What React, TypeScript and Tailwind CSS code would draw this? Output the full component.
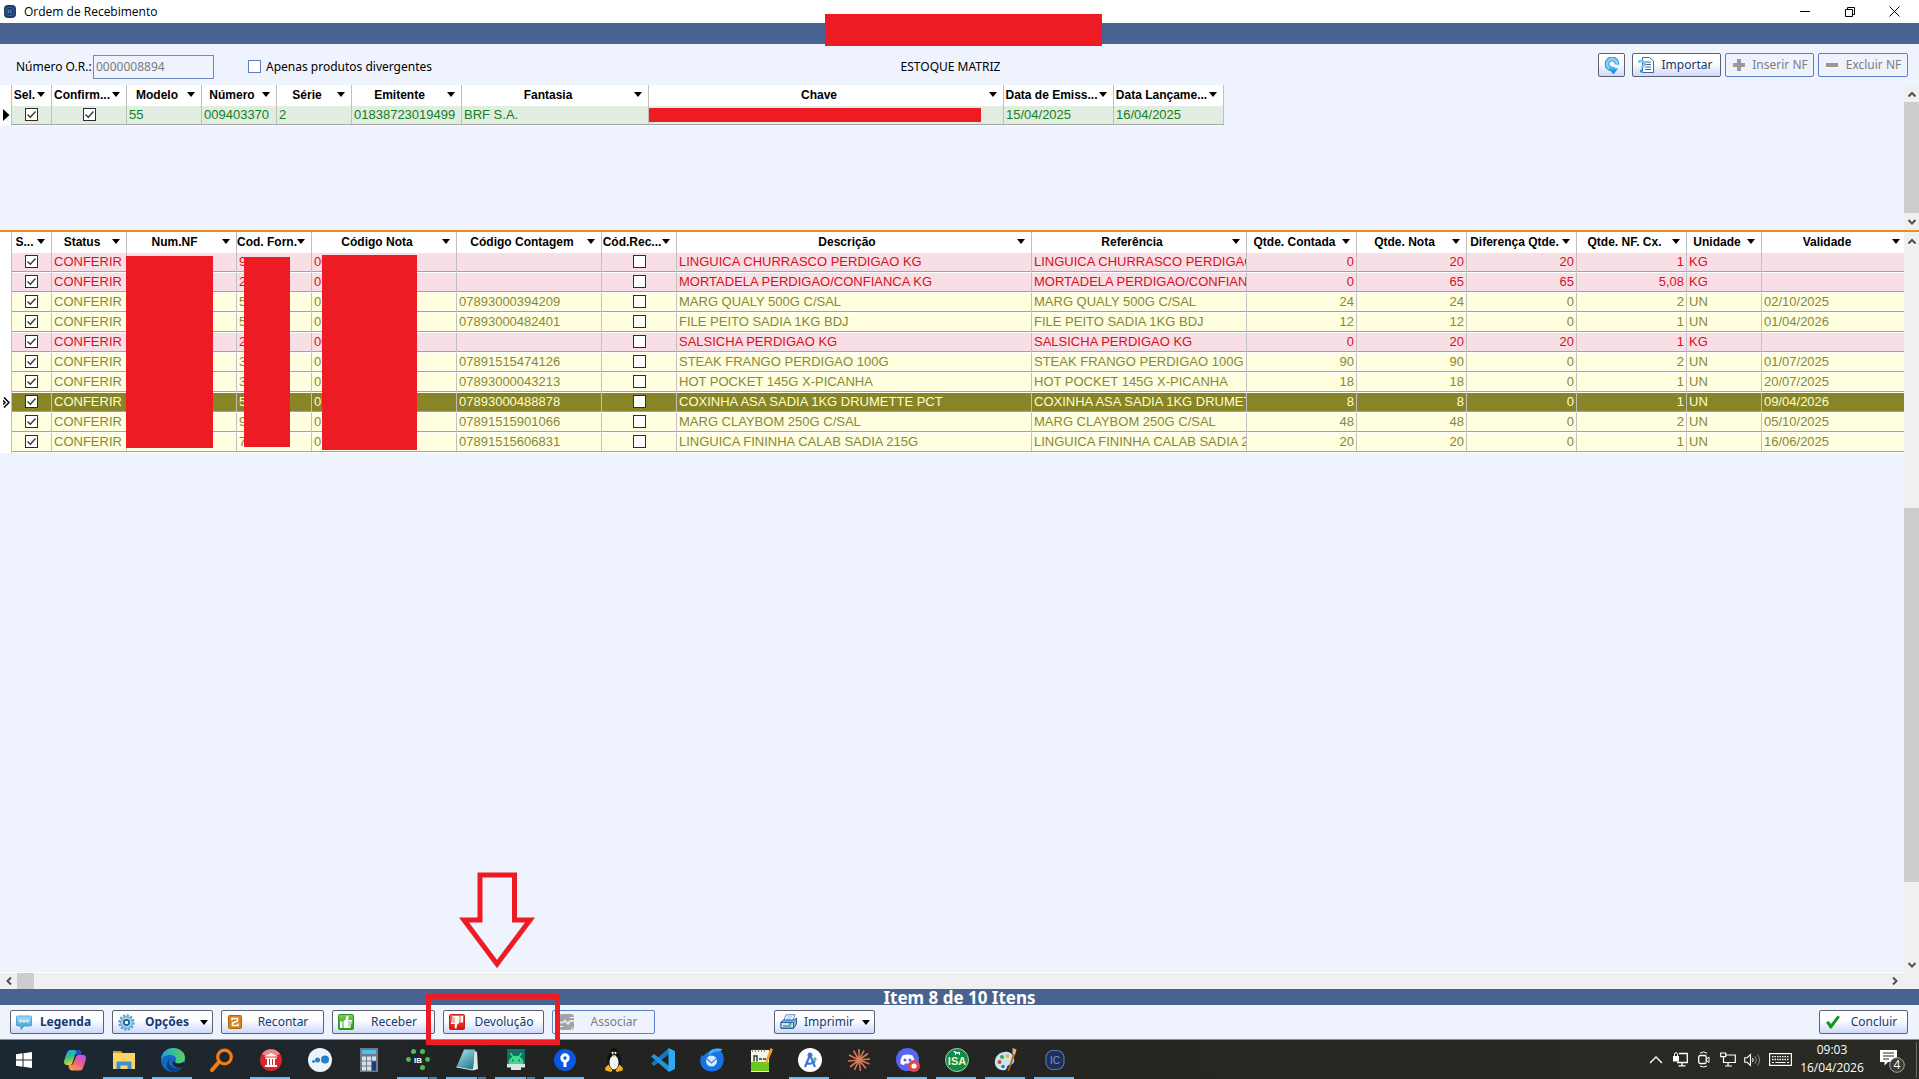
import React from "react";

const UI_FONT = "font-['Noto_Sans',sans-serif]";
const GRID_FONT = "font-['Liberation_Sans',Arial,sans-serif]";

type Align = "left" | "right" | "center";
type Column = { title: string; width: string; align?: Align };

const NOTE_COLUMNS: Column[] = [
  { title: "Sel.", width: "w-[40px]" },
  { title: "Confirm...", width: "w-[75px]" },
  { title: "Modelo", width: "w-[75px]" },
  { title: "Número", width: "w-[75px]" },
  { title: "Série", width: "w-[75px]" },
  { title: "Emitente", width: "w-[110px]" },
  { title: "Fantasia", width: "w-[187px]" },
  { title: "Chave", width: "w-[355px]" },
  { title: "Data de Emiss...", width: "w-[110px]" },
  { title: "Data Lançame...", width: "w-[110px]" },
];

const ITEM_COLUMNS: Column[] = [
  { title: "S...", width: "w-[40px]" },
  { title: "Status", width: "w-[75px]" },
  { title: "Num.NF", width: "w-[110px]" },
  { title: "Cod. Forn.", width: "w-[75px]" },
  { title: "Código Nota", width: "w-[145px]" },
  { title: "Código Contagem", width: "w-[145px]" },
  { title: "Cód.Rec...", width: "w-[75px]" },
  { title: "Descrição", width: "w-[355px]" },
  { title: "Referência", width: "w-[215px]" },
  { title: "Qtde. Contada", width: "w-[110px]" },
  { title: "Qtde. Nota", width: "w-[110px]" },
  { title: "Diferença Qtde.", width: "w-[110px]" },
  { title: "Qtde. NF. Cx.", width: "w-[110px]" },
  { title: "Unidade", width: "w-[75px]" },
  { title: "Validade", width: "" },
];

type Item = {
  forn: string;
  nota: string;
  contagem: string;
  desc: string;
  contada: string;
  qnota: string;
  dif: string;
  cx: string;
  un: string;
  validade: string;
};

const ITEMS: Item[] = [
  { forn: "9", nota: "00", contagem: "", desc: "LINGUICA CHURRASCO PERDIGAO KG", contada: "0", qnota: "20", dif: "20", cx: "1", un: "KG", validade: "" },
  { forn: "2", nota: "07", contagem: "", desc: "MORTADELA PERDIGAO/CONFIANCA KG", contada: "0", qnota: "65", dif: "65", cx: "5,08", un: "KG", validade: "" },
  { forn: "5", nota: "07", contagem: "07893000394209", desc: "MARG QUALY 500G C/SAL", contada: "24", qnota: "24", dif: "0", cx: "2", un: "UN", validade: "02/10/2025" },
  { forn: "5", nota: "07", contagem: "07893000482401", desc: "FILE PEITO SADIA 1KG BDJ", contada: "12", qnota: "12", dif: "0", cx: "1", un: "UN", validade: "01/04/2026" },
  { forn: "2", nota: "00", contagem: "", desc: "SALSICHA PERDIGAO KG", contada: "0", qnota: "20", dif: "20", cx: "1", un: "KG", validade: "" },
  { forn: "3", nota: "07", contagem: "07891515474126", desc: "STEAK FRANGO PERDIGAO 100G", contada: "90", qnota: "90", dif: "0", cx: "2", un: "UN", validade: "01/07/2025" },
  { forn: "3", nota: "07", contagem: "07893000043213", desc: "HOT POCKET 145G X-PICANHA", contada: "18", qnota: "18", dif: "0", cx: "1", un: "UN", validade: "20/07/2025" },
  { forn: "5", nota: "07", contagem: "07893000488878", desc: "COXINHA ASA SADIA 1KG DRUMETTE PCT", contada: "8", qnota: "8", dif: "0", cx: "1", un: "UN", validade: "09/04/2026" },
  { forn: "9", nota: "07", contagem: "07891515901066", desc: "MARG CLAYBOM 250G C/SAL", contada: "48", qnota: "48", dif: "0", cx: "2", un: "UN", validade: "05/10/2025" },
  { forn: "7", nota: "07", contagem: "07891515606831", desc: "LINGUICA FININHA CALAB SADIA 215G", contada: "20", qnota: "20", dif: "0", cx: "1", un: "UN", validade: "16/06/2025" },
];

const SELECTED = 7;

function Caret() {
  return (
    <svg width="8" height="5" viewBox="0 0 8 5" aria-hidden="true">
      <path d="M0 0h8L4 5z" fill="#000" />
    </svg>
  );
}

function Tick({ label, checked }: { label: string; checked?: boolean }) {
  return (
    <span className="grid size-[13px] place-items-center">
      <input
        type="checkbox"
        aria-label={label}
        defaultChecked={checked}
        className="peer col-start-1 row-start-1 size-[13px] appearance-none border border-[#2c2c2c] bg-white"
      />
      <svg viewBox="0 0 13 13" className="pointer-events-none col-start-1 row-start-1 hidden size-[13px] peer-checked:block" aria-hidden="true">
        <path d="M2.5 6.5l2.8 2.8L10.5 3.5" fill="none" stroke="#333" strokeWidth="1.3" />
      </svg>
    </span>
  );
}

function HeadRow({ columns }: { columns: Column[] }) {
  return (
    <thead>
      <tr className="h-[21px] bg-white">
        <th className="w-[12px] border-r border-[#c0c0c0] p-0" aria-label="Indicador" />
        {columns.map((c) => (
          <th key={c.title} className={`${c.width} border-r border-[#c0c0c0] p-0 text-xs leading-4 font-bold text-black`}>
            <div className="flex items-center overflow-hidden pr-1.5 pb-0.5">
              <span className="min-w-0 flex-1 text-center whitespace-nowrap">{c.title}</span>
              <button type="button" aria-label={`Filtrar ${c.title}`} className="flex h-4 w-2 shrink-0 items-center">
                <Caret />
              </button>
            </div>
          </th>
        ))}
      </tr>
    </thead>
  );
}

function Cell({ children, align = "left" }: { children?: React.ReactNode; align?: Align }) {
  const a = align === "right" ? "text-right" : align === "center" ? "text-center" : "text-left";
  return (
    <td className={`${a} overflow-hidden border-r border-b border-r-[#c0c0c0] border-b-white px-0.5 pt-0 pb-0.5 whitespace-nowrap shadow-[inset_0_-1px_0_#a3a3a3]`}>
      {children}
    </td>
  );
}

function TickCell({ label, checked }: { label: string; checked?: boolean }) {
  return (
    <Cell>
      <div className="flex justify-center">
        <Tick label={label} checked={checked} />
      </div>
    </Cell>
  );
}

function Redaction({ className }: { className: string }) {
  return <div aria-hidden="true" className={`absolute bg-[#ed1c24] ${className}`} />;
}

function Chevron({ dir }: { dir: "up" | "down" | "left" | "right" }) {
  const d = {
    up: "M1.5 7.5L5 4l3.5 3.5",
    down: "M1.5 3L5 6.5 8.5 3",
    left: "M7 1.5L3.5 5 7 8.5",
    right: "M3 1.5L6.5 5 3 8.5",
  }[dir];
  return (
    <svg width="10" height="10" viewBox="0 0 10 10" aria-hidden="true">
      <path d={d} fill="none" stroke="#505050" strokeWidth="2" />
    </svg>
  );
}

function VScroll({ children }: { children: React.ReactNode }) {
  return (
    <div className="flex w-[15px] shrink-0 flex-col bg-[#f0f0f0]">
      <button type="button" aria-label="Rolar para cima" className="grid h-[17px] place-items-center">
        <Chevron dir="up" />
      </button>
      <div className="flex flex-1 flex-col">{children}</div>
      <button type="button" aria-label="Rolar para baixo" className="grid h-[17px] place-items-center">
        <Chevron dir="down" />
      </button>
    </div>
  );
}

function ToolButton({
  icon,
  label,
  className,
  bold,
  disabled,
  caret,
}: {
  icon: React.ReactNode;
  label?: string;
  className: string;
  bold?: boolean;
  disabled?: boolean;
  caret?: boolean;
}) {
  const look = disabled
    ? "border-[#5b80cc] bg-[#eef3fe] text-[#7d7d7d]"
    : "border-[#5c6274] bg-linear-to-b from-white from-40% to-[#ced9fb] text-[#143a72]";
  return (
    <button
      type="button"
      disabled={disabled}
      aria-label={label ?? "Atualizar"}
      className={`${className} ${look} ${bold ? "font-bold" : ""} flex h-6 shrink-0 items-center rounded-xs border pr-1 pl-[5px] text-xs`}
    >
      <span className="grid size-4 shrink-0 place-items-center">{icon}</span>
      {label && <span className={`${caret || bold ? "" : "pl-1"} flex-1 text-center whitespace-nowrap`}>{label}</span>}
      {caret && <Caret />}
    </button>
  );
}

const RefreshIcon = () => (
  <svg width="16" height="18" viewBox="0 0 16 18">
    <path d="M13 7.500A5 5 0 1 0 8 12" fill="none" stroke="#2389cf" strokeWidth="4.600" />
    <path d="M13 7.500A5 5 0 1 0 8 12" fill="none" stroke="#86d3f7" strokeWidth="2.800" />
    <path d="M4.500 11.500h9.500L9.500 17.500z" fill="#2492dd" />
    <path d="M7.500 10h3.500v3H7.500z" fill="#4ab0ea" />
  </svg>
);

const ImportIcon = () => (
  <svg width="16" height="16" viewBox="0 0 16 16">
    <path d="M4.500.5h7l4 3.500v11.500h-11z" fill="#fff" stroke="#44679a" />
    <path d="M7 5h6M7 7.500h6M7 10h6M7 12.500h6" stroke="#44679a" />
    <path d="M0 5.500c2-2.500 6-2 6.500 1 .2 2-2.500 2-2.500 4.500" fill="none" stroke="#6fc8f5" strokeWidth="2.600" />
    <circle cx="3.500" cy="14" r="1.700" fill="#2a95dc" />
  </svg>
);

const PlusIcon = () => (
  <svg width="12" height="12" viewBox="0 0 12 12">
    <path d="M4 0h4v4h4v4H8v4H4V8H0V4h4z" fill="#9a9a9a" />
  </svg>
);

const MinusIcon = () => (
  <svg width="12" height="4" viewBox="0 0 12 4">
    <path d="M0 0h12v4H0z" fill="#9a9a9a" />
  </svg>
);

const LegendIcon = () => (
  <svg width="16" height="16" viewBox="0 0 16 16">
    <defs>
      <linearGradient id="lg" x2="0" y2="1">
        <stop stopColor="#a5dcf7" />
        <stop offset="1" stopColor="#2b95da" />
      </linearGradient>
    </defs>
    <path d="M1.500 2h13q1 0 1 1v8q0 1-1 1H8l-3 3.500V12H1.500q-1 0-1-1V3q0-1 1-1z" fill="url(#lg)" stroke="#3b97d0" strokeWidth=".8" />
    <g fill="none" stroke="#fff">
      <circle cx="4.500" cy="7" r="1.100" />
      <circle cx="8" cy="7" r="1.100" />
      <circle cx="11.500" cy="7" r="1.100" />
    </g>
  </svg>
);

const GearIcon = () => (
  <svg width="17" height="17" viewBox="0 0 17 17">
    <circle cx="8.500" cy="8.500" r="7.200" fill="none" stroke="#5b9fd2" strokeWidth="2" strokeDasharray="2.270 1.500" />
    <circle cx="8.500" cy="8.500" r="5.800" fill="#a8daf6" stroke="#4c94cc" />
    <circle cx="8.500" cy="8.500" r="2.600" fill="#fff" stroke="#1e5c96" strokeWidth="1.700" />
  </svg>
);

const RecountIcon = () => (
  <svg width="14" height="14" viewBox="0 0 14 14">
    <rect x=".5" y=".5" width="13" height="13" rx="1" fill="#d9801f" stroke="#b3620e" />
    <path d="M4 5.500V3.500h5.500V6L4.500 8v2.500H10v-2" fill="none" stroke="#fff" strokeWidth="1.600" />
  </svg>
);

const Thumb = ({ down }: { down?: boolean }) => (
  <svg width="16" height="16" viewBox="0 0 16 16">
    <defs>
      <linearGradient id={down ? "thd" : "thu"} x2="0" y2="1">
        <stop stopColor={down ? "#f26a5e" : "#7fce5c"} />
        <stop offset="1" stopColor={down ? "#d61208" : "#249a12"} />
      </linearGradient>
    </defs>
    <rect x=".5" y=".5" width="15" height="15" rx="1" fill={down ? "url(#thd)" : "url(#thu)"} stroke={down ? "#c4241a" : "#2f9420"} />
    <g transform={down ? "rotate(180 8 8)" : undefined}>
      <path d="M2 7.500h2.500V14H2z" fill="#fff" />
      <path d="M5.500 14V7.500L8 5l.5-3.500q2-.5 2 2L10 6h4v2h-.5v2H13v2h-.5v2z" fill="#fff" />
      <path d="M10 8h3.500M10 10h3M10 12h2.500" stroke={down ? "#e02418" : "#3fae2a"} strokeWidth=".700" />
    </g>
  </svg>
);

const AssociateIcon = () => (
  <svg width="15" height="16" viewBox="0 0 15 16">
    <rect width="15" height="16" rx="3" fill="#a3a3a3" />
    <path d="M0 8.500h4l2-2 3 3.500 2-3h4" fill="none" stroke="#eef3fe" strokeWidth="1.400" />
    <path d="M11 3.500h4M0 12.500h4M12 16l1.500-2.500" stroke="#eef3fe" fill="none" />
  </svg>
);

const PrinterIcon = () => (
  <svg width="17" height="16" viewBox="0 0 17 16">
    <path d="M6 .8h9L12.500 7H3.500z" fill="#fff" stroke="#5289c4" />
    <path d="M7 3h5M6 5h5" stroke="#8fb4dc" />
    <path d="M1 8l2.500-2H14l2.500-2v6l-3 4.500H1z" fill="#7db3e6" stroke="#2d629c" />
    <path d="M1 8.500h12.500V14H1z" fill="#cfe4f7" stroke="#2d629c" />
    <path d="M3 12h8" stroke="#2d629c" />
    <path d="M8.500 10h3" stroke="#3ba03b" strokeWidth="1.300" />
  </svg>
);

const CheckIcon = () => (
  <svg width="14" height="14" viewBox="0 0 14 14">
    <path d="M0 7.500L2.500 6l2.500 3L11.500.5 14 2 5.500 13.500H4z" fill="#0f9a17" />
  </svg>
);

/* ---- Taskbar icons ---- */

const Svg = ({ children }: { children: React.ReactNode }) => (
  <svg width="24" height="24" viewBox="0 0 24 24" aria-hidden="true">
    {children}
  </svg>
);

type App = { name: string; icon: React.ReactNode; open?: boolean; group?: boolean };

const APPS: App[] = [
  {
    name: "Copilot",
    icon: (
      <Svg>
        <defs>
          <linearGradient id="cp1" x1="0" x2=".3" y2="1">
            <stop stopColor="#1aa6f0" />
            <stop offset=".5" stopColor="#2fc08c" />
            <stop offset="1" stopColor="#e9d22a" />
          </linearGradient>
          <linearGradient id="cp2" x1="1" x2=".3" y2="1">
            <stop stopColor="#a45cf0" />
            <stop offset=".5" stopColor="#ee5a94" />
            <stop offset="1" stopColor="#f79a4c" />
          </linearGradient>
        </defs>
        <path d="M7 2h8q2.500 0 3.200 3H14q-1.500 0-2.200 2.500L9.500 15Q8.800 17 7 17H4Q.2 17 1.300 12L4 4.500Q5 2 7 2z" fill="url(#cp1)" />
        <path d="M12.500 2H15q2.500 0 3.200 3l.8 3h-5z" fill="#2449c4" />
        <path d="M17 22.500H9q-2.500 0-3.200-3l-.5-2.500H8q2 0 2.700-2.500L13 8.500Q13.700 7 15.500 7H20q3.800 0 2.700 5L20 20q-1 2.500-3 2.500z" fill="url(#cp2)" />
      </Svg>
    ),
  },
  {
    name: "Explorador de Arquivos",
    open: true,
    icon: (
      <Svg>
        <path d="M1 3h8l2 2.500H1z" fill="#d99a16" />
        <path d="M1 5h22v16H1z" fill="#fbd667" />
        <path d="M4.500 21v-7.500h15V21h-4v-3.500h-7V21z" fill="#3f8fd6" />
      </Svg>
    ),
  },
  {
    name: "Microsoft Edge",
    open: true,
    icon: (
      <Svg>
        <defs>
          <linearGradient id="ed" x2="1">
            <stop stopColor="#1d9be0" />
            <stop offset="1" stopColor="#5bd65a" />
          </linearGradient>
        </defs>
        <circle cx="12" cy="12" r="12" fill="#1169c4" />
        <path d="M0 11C1 4 6 0 12 0c7 0 12 4.500 12 9.500 0 4-3 6-6.500 6-3 0-4-1.200-3-2.500 2-3-1-6-5-6-4.500 0-8 2-9 4z" fill="url(#ed)" />
        <path d="M9 10c-3 5 1 11 8 10.500 2 0 4-.8 5-1.500-2 3.500-6 5-10 5C6 23 3 16 9 10z" fill="#0c3f8c" />
        <path d="M14.200 13.500c-1 2 3.500 3 7.800.5l2 1.500-1.500 3.500C19 21 11 19.500 11.500 13.500z" fill="#1f2428" />
      </Svg>
    ),
  },
  {
    name: "Pesquisar",
    icon: (
      <Svg>
        <circle cx="14.500" cy="9" r="6.800" fill="none" stroke="#f57c0e" strokeWidth="3.200" />
        <path d="M9 14l-7 8" stroke="#f57c0e" strokeWidth="4" strokeLinecap="round" />
      </Svg>
    ),
  },
  {
    name: "Banco",
    open: true,
    icon: (
      <Svg>
        <circle cx="12" cy="12" r="11" fill="#d8262b" />
        <path d="M3 6a11 11 0 0 1 18 0q-9 5-18 0z" fill="#f0898a" />
        <path d="M5 8.500L12 5l7 3.500zM6.500 9.500h11v1.500h-11zM8 11h2v6H8zM11 11h2v6h-2zM14 11h2v6h-2zM6 17h12v2H6z" fill="#fff" />
      </Svg>
    ),
  },
  {
    name: "Conector",
    icon: (
      <Svg>
        <circle cx="12" cy="12" r="12" fill="#e9f5fc" />
        <circle cx="17" cy="11.500" r="4" fill="#2a7fc4" />
        <circle cx="9.500" cy="12" r="2.500" fill="#2a7fc4" />
        <circle cx="5.500" cy="13.500" r="1.400" fill="#2a7fc4" />
      </Svg>
    ),
  },
  {
    name: "Calculadora",
    icon: (
      <Svg>
        <path d="M3 0h18v24H3z" fill="#6d7b88" />
        <path d="M5 2h14v4H5z" fill="#4cc3f0" />
        <path d="M5 8.500h4v4H5zM10 8.500h4v4h-4zM15 8.500h4v4h-4zM5 13.500h4v4H5zM10 13.500h4v4h-4zM5 18.500h4v4H5zM10 18.500h4v4h-4z" fill="#d9e2ea" />
        <path d="M15 13.500h4v9h-4z" fill="#143f78" />
      </Svg>
    ),
  },
  {
    name: "IB",
    open: true,
    group: true,
    icon: (
      <Svg>
        <g fill="#4bc04b">
          <circle cx="7.500" cy="3.500" r="2.500" />
          <circle cx="16.500" cy="3.500" r="2.500" />
          <circle cx="2.500" cy="11.500" r="2.400" />
          <circle cx="21.500" cy="11.500" r="2.400" />
          <circle cx="16.500" cy="19.500" r="2.500" />
        </g>
        <text x="12" y="14.500" textAnchor="middle" fontSize="8" fontWeight="700" fill="#fff" fontFamily="Liberation Sans">IB</text>
      </Svg>
    ),
  },
  {
    name: "Bloco de Notas",
    open: true,
    group: true,
    icon: (
      <Svg>
        <defs>
          <linearGradient id="nt" x2=".6" y2="1">
            <stop stopColor="#b5e8ee" />
            <stop offset="1" stopColor="#2b7f96" />
          </linearGradient>
        </defs>
        <path d="M19 2.500l3 1.500 1 17-5 1.500z" fill="#dfe6e8" />
        <path d="M9 1.500h11L17.500 22 1.500 19z" fill="url(#nt)" />
        <path d="M1.500 19L17.500 22l1-2" fill="none" stroke="#cfe0e4" />
      </Svg>
    ),
  },
  {
    name: "Android",
    open: true,
    group: true,
    icon: (
      <Svg>
        <path d="M3 1h18v17H3z" fill="#116f63" />
        <path d="M4.500 16c0-11 15-11 15 0z" fill="#3ddc84" />
        <path d="M6.500 5L9.500 9.500M17.500 5L14.500 9.500" stroke="#3ddc84" strokeWidth="1.500" />
        <circle cx="8.800" cy="12.500" r=".9" fill="#116f63" />
        <circle cx="15.200" cy="12.500" r=".9" fill="#116f63" />
        <path d="M3 16h18v3.500H3zM7 19.500h10V22H7z" fill="#dfe5e6" />
      </Svg>
    ),
  },
  {
    name: "Sourcetree",
    open: true,
    icon: (
      <Svg>
        <circle cx="12" cy="12" r="11" fill="#0b57e3" />
        <circle cx="12" cy="10" r="4.700" fill="#fff" />
        <circle cx="12" cy="10" r="1.700" fill="#0b57e3" />
        <path d="M10.500 13h3v6h-3z" fill="#fff" />
      </Svg>
    ),
  },
  {
    name: "Linux",
    icon: (
      <Svg>
        <ellipse cx="12" cy="13" rx="7" ry="9.500" fill="#111" />
        <ellipse cx="12" cy="5" rx="3.800" ry="5" fill="#111" />
        <ellipse cx="12" cy="14.500" rx="4.500" ry="7" fill="#f5f5f5" />
        <circle cx="10.600" cy="4.800" r="1.100" fill="#fff" />
        <circle cx="13.500" cy="4.800" r="1.100" fill="#fff" />
        <path d="M9.800 6.800h4.500L12 9z" fill="#f2a91c" />
        <path d="M3 20l3.500-3.500 4 6-1.500 1.500-5.500-1.500zM21 20l-3.500-3.500-4 6L15 24l5.500-1.500z" fill="#f2b01c" />
      </Svg>
    ),
  },
  {
    name: "Visual Studio Code",
    icon: (
      <Svg>
        <path d="M18 0v6L3 18 0 15.500z" fill="#1476bd" />
        <path d="M0 8.500L3 6l15 12v6z" fill="#2196dc" />
        <path d="M17.500 0L24 3v18l-6.500 3z" fill="#2fabf0" />
      </Svg>
    ),
  },
  {
    name: "Thunderbird",
    icon: (
      <Svg>
        <path d="M9 4c4-4 9-4 14-2.500-2 .5-2.500 1-2 2C25 8 24 14 22 18c-3 6-13 7-18 3C-1 17-.5 9 2.500 6.500c.3 1 .5 1.500 1 2C4.500 6 6.500 4.500 9 4z" fill="#1673df" />
        <path d="M9 4c4-4 9-4 14-2.500-2 .5-2.500 1-2 2C16 3 12 4 8 8z" fill="#45aaf7" />
        <circle cx="11.500" cy="13" r="5.500" fill="#d5ebff" />
        <path d="M6.500 10.500l5 4.500 5-4.500" fill="none" stroke="#3486dc" strokeWidth="1.300" />
      </Svg>
    ),
  },
  {
    name: "Notepad++",
    icon: (
      <Svg>
        <path d="M2 2h18v22H2z" fill="#f2f7ea" />
        <path d="M2 14h18v9H2z" fill="#6cc71e" />
        <path d="M3.500 1v3M6.500 1v3M9.500 1v3M12.500 1v3M15.500 1v3" stroke="#666" strokeWidth=".8" />
        <path d="M5 13.500V8h3v5.500M10 11h3M14 11h3" fill="none" stroke="#333" strokeWidth="1.400" />
        <path d="M21.500 0l2.500 1.500-6 14-2.500 1.500.5-3z" fill="#eda02c" />
      </Svg>
    ),
  },
  {
    name: "Android Studio",
    open: true,
    icon: (
      <Svg>
        <circle cx="12" cy="12" r="12" fill="#fff" />
        <path d="M7 19l4.500-11h1L17 19M8 14c2 2.500 6 2.500 9-1" fill="none" stroke="#3a78d8" strokeWidth="2.200" />
        <circle cx="12" cy="7" r="2.500" fill="#3a78d8" />
        <circle cx="17" cy="11" r="1.700" fill="#3fc27a" />
      </Svg>
    ),
  },
  {
    name: "Claude",
    icon: (
      <Svg>
        <path
          d="M12 12L12 1M12 12l5-9.500M12 12l9-6.500M12 12l11-1M12 12l10.500 4M12 12l7 8.500M12 12l1.500 11M12 12L7.500 22M12 12l-9 7M12 12L1 13M12 12L2 7M12 12L6.500 2.500"
          stroke="#d97757"
          strokeWidth="1.600"
        />
      </Svg>
    ),
  },
  {
    name: "Discord",
    open: true,
    icon: (
      <Svg>
        <circle cx="11.500" cy="11.500" r="11.500" fill="#5865f2" />
        <path d="M6.500 7.500q5-2 10 0 2.500 4 2 8-2 1.500-3.500 1.500l-1-1.500h-5l-1 1.500q-2 0-3.500-1.500-.5-4 2-8z" fill="#fff" />
        <circle cx="9" cy="12" r="1.500" fill="#5865f2" />
        <circle cx="14" cy="12" r="1.500" fill="#5865f2" />
        <circle cx="18" cy="18" r="6" fill="#e2464a" />
        <circle cx="18" cy="18" r="2.600" fill="#fff" />
      </Svg>
    ),
  },
  {
    name: "ISA",
    open: true,
    icon: (
      <Svg>
        <circle cx="12" cy="12" r="11.500" fill="#0d8a4c" stroke="#c8e6d2" strokeWidth=".8" />
        <path d="M8 3h2l1 1h4v3h-1V5.500h-3V7h-1V5z" fill="#fff" />
        <text x="12" y="17" textAnchor="middle" fontSize="11" fontWeight="700" fill="#f4f7b0" fontFamily="Liberation Sans">ISA</text>
      </Svg>
    ),
  },
  {
    name: "Paint",
    open: true,
    icon: (
      <Svg>
        <path d="M10 4C3 5 0 11 1 16c1 4 5 7 10 6 3-1 1-4 4-5 4 0 6-3 5-7-1-4-5-7-10-6z" fill="#c9e4f3" />
        <circle cx="5.500" cy="14" r="2" fill="#e0402f" />
        <circle cx="8" cy="9" r="2" fill="#36a852" />
        <circle cx="13.500" cy="8" r="1.800" fill="#f5b521" />
        <circle cx="9" cy="18.500" r="1.800" fill="#3b6fd8" />
        <path d="M19 6l2 1-6 16-1.500 0z" fill="#b5651d" />
        <path d="M18.500 0l4 1.500L21 7l-2.500-1z" fill="#e6b27a" />
      </Svg>
    ),
  },
  {
    name: "IC",
    open: true,
    icon: (
      <Svg>
        <rect x="3" y="2.500" width="18" height="19" rx="7" fill="#1f2f55" stroke="#5874ad" strokeWidth="1.200" />
        <text x="12" y="16" textAnchor="middle" fontSize="10" fill="#7d97cc" fontFamily="Liberation Sans">IC</text>
      </Svg>
    ),
  },
];

function Taskbar() {
  return (
    <nav aria-label="Barra de tarefas" className="flex h-10 shrink-0 items-stretch border-t border-[#8f8f8f] bg-linear-to-r from-[#1b2833] via-[#222321] via-30% to-[#2a2a25] text-white">
      <button type="button" aria-label="Iniciar" className="mr-0.5 grid w-12 place-items-center">
        <svg width="16" height="16" viewBox="0 0 16 16">
          <path d="M0 2.200L6.500 1.300v6.200H0zM7.500 1.200L16 0v7.500H7.500zM0 8.500h6.500v6.200L0 13.800zM7.500 8.500H16V16l-8.500-1.200z" fill="#fff" />
        </svg>
      </button>
      {APPS.map((a) => (
        <button type="button" key={a.name} aria-label={a.name} className="relative grid w-[49px] place-items-center">
          {a.icon}
          {a.open && (
            <span className="absolute bottom-0 left-1 flex h-0.5 w-10 gap-px">
              <span className="flex-1 bg-[#76b9ed]" />
              {a.group && <span className="w-2 bg-[#527f9f]" />}
            </span>
          )}
        </button>
      ))}
      <div className="ml-auto flex items-center">
        <button type="button" aria-label="Ícones ocultos" className="grid w-6 place-items-center">
          <svg width="14" height="8" viewBox="0 0 14 8"><path d="M1 7l6-6 6 6" fill="none" stroke="#fff" strokeWidth="1.300" /></svg>
        </button>
        <span className="grid w-6 place-items-center">
          <svg width="15" height="15" viewBox="0 0 15 15">
            <path d="M6 1.500h8.300v9H4M9 10.500v3M5.500 13.800h7" fill="none" stroke="#fff" strokeWidth="1.300" />
            <path d="M0 4h6v5.500H0z" fill="#fff" /><path d="M1.500 4V2.200a1.500 1.500 0 0 1 3 0V4" fill="none" stroke="#fff" />
          </svg>
        </span>
        <span className="grid w-6 place-items-center">
          <svg width="14" height="17" viewBox="0 0 14 17">
            <rect x="1.700" y="4.500" width="7.500" height="8" rx="1.500" fill="none" stroke="#fff" strokeWidth="1.300" />
            <path d="M9.500 8l2.500-2v5.500l-2.500-2M3 2.200q3.500-2.500 7 0M3 15q3.500 2 7 0" fill="none" stroke="#fff" />
          </svg>
        </span>
        <span className="grid w-6 place-items-center">
          <svg width="16" height="15" viewBox="0 0 16 15">
            <path d="M5 3h10.300v7.500H3.500V6M8 10.500v3.300M5 14h7M.7 1h5v3.700h-5zM3.500 5v3" fill="none" stroke="#fff" strokeWidth="1.200" />
          </svg>
        </span>
        <span className="grid w-6 place-items-center">
          <svg width="17" height="14" viewBox="0 0 17 14">
            <path d="M.7 4.700h2.500L6.500 1.500v11L3.200 9.300H.7zM8.500 5q1.500 2 0 4" fill="none" stroke="#fff" strokeWidth="1.100" />
            <path d="M11 3.200q3 3.800 0 7.600M13.500 1.500q4 5.500 0 11" fill="none" stroke="#8a8a8a" />
          </svg>
        </span>
        <span className="grid w-8 place-items-center">
          <svg width="23" height="13" viewBox="0 0 23 13">
            <rect x=".6" y=".6" width="21.800" height="11.800" fill="none" stroke="#fff" strokeWidth="1.200" />
            <path d="M3 3.700h17M3 6.500h17" stroke="#fff" strokeWidth="1.300" strokeDasharray="1.500 1" />
            <path d="M3 9.500h2M6.500 9.500h10M18 9.500h2" stroke="#fff" strokeWidth="1.200" />
          </svg>
        </span>
        <div className="w-[72px] pb-0.5 text-center font-['Open_Sans',sans-serif] text-xs leading-[18px]">
          <div>09:03</div>
          <div>16/04/2026</div>
        </div>
        <button type="button" aria-label="Notificações" className="relative mr-2.5 ml-2.5 grid w-7 place-items-center">
          <svg width="26" height="26" viewBox="0 0 26 26">
            <path d="M1 3h17v12H9l-3.500 3.500V15H1z" fill="#fff" />
            <path d="M4 6h11M4 9h11M4 12h6" stroke="#2a2a25" strokeWidth="1.200" />
            <circle cx="18" cy="18" r="7.300" fill="#3a3a38" stroke="#a9a9a9" />
            <text x="18" y="22" textAnchor="middle" fontSize="12" fill="#fff" fontFamily="Open Sans">4</text>
          </svg>
        </button>
        <span className="mr-0.5 h-9 w-px bg-[#6c6c6c]" />
      </div>
    </nav>
  );
}

export default function App() {
  return (
    <div className={`${UI_FONT} flex min-h-screen flex-col bg-[#eef3fe] text-xs text-black`}>
      <div className="relative">
        <header className="flex h-[23px] items-center bg-white pl-1 font-['Open_Sans',sans-serif]">
          <svg width="12" height="13" viewBox="0 0 12 13" aria-hidden="true">
            <rect width="12" height="13" rx="4" fill="#1d3a6e" />
            <rect x="2" y="2.500" width="8" height="8" rx="2.500" fill="none" stroke="#3f5f98" />
            <path d="M4.300 4.500v4M8 5.200q-2-.8-2 1.300t2 1.300" fill="none" stroke="#6f8cc0" />
          </svg>
          <h1 className="ml-2 flex-1">Ordem de Recebimento</h1>
          <button type="button" aria-label="Minimizar" className="grid h-5 w-[45px] place-items-center">
            <svg width="10" height="10" viewBox="0 0 10 10"><path d="M0 4.500h10" stroke="#000" /></svg>
          </button>
          <button type="button" aria-label="Restaurar" className="grid h-5 w-[45px] place-items-center">
            <svg width="10" height="10" viewBox="0 0 10 10"><path d="M.5 2.500h7v7h-7zM2.500 2V.5h7v7H8" fill="none" stroke="#000" /></svg>
          </button>
          <button type="button" aria-label="Fechar" className="mr-0.5 grid h-5 w-[45px] place-items-center">
            <svg width="11" height="11" viewBox="0 0 11 11"><path d="M.5.5l10 10M10.500.5l-10 10" stroke="#000" /></svg>
          </button>
        </header>
        <div className="h-[21px] bg-[#48638f]" />
        <Redaction className="top-3.5 left-[43%] h-8 w-[277px]" />
      </div>

      <section className="relative flex h-[41px] items-center pr-[11px] pl-4">
        <div className="flex items-center pt-1">
          <label htmlFor="numero" className="w-[77px] whitespace-nowrap">Número O.R.:</label>
          <input id="numero" readOnly value="0000008894" className="h-6 w-[121px] border border-[#6f89b8] bg-[#eef3fe] px-0.5 text-[#7b7b7b]" />
          <label className="ml-[34px] flex items-center gap-[5px] whitespace-nowrap">
            <input type="checkbox" className="size-[13px] appearance-none border border-[#5f7fb8] bg-white" />
            Apenas produtos divergentes
          </label>
        </div>
        <p className="pointer-events-none absolute inset-x-0 pt-1 pr-[18px] text-center">ESTOQUE MATRIZ</p>
        <div className="ml-auto flex items-center">
          <ToolButton icon={<RefreshIcon />} className="w-[27px]" />
          <ToolButton icon={<ImportIcon />} label="Importar" className="ml-[7px] w-[89px]" />
          <ToolButton icon={<PlusIcon />} label="Inserir NF" disabled className="ml-1 w-[89px]" />
          <ToolButton icon={<MinusIcon />} label="Excluir NF" disabled className="ml-1 w-[90px]" />
        </div>
      </section>

      <section className="flex h-[145px] shrink-0">
        <div className={`${GRID_FONT} min-w-0 flex-1 overflow-hidden`}>
          <div className="relative w-[1224px]">
            <table className="w-full table-fixed border-separate border-spacing-0">
              <HeadRow columns={NOTE_COLUMNS} />
              <tbody>
                <tr className="h-5 bg-[#e0ede0] text-[13px] leading-[17px] text-[#12801c]">
                  <td className="border-r border-[#c0c0c0] bg-white p-0">
                    <svg width="7" height="12" viewBox="0 0 7 12" className="mb-0.5 ml-[3px]"><path d="M0 0l6.500 6L0 12z" fill="#000" /></svg>
                  </td>
                  <TickCell label="Selecionar nota" checked />
                  <TickCell label="Confirmar nota" checked />
                  <Cell>55</Cell>
                  <Cell>009403370</Cell>
                  <Cell>2</Cell>
                  <Cell>01838723019499</Cell>
                  <Cell>BRF S.A.</Cell>
                  <Cell />
                  <Cell>15/04/2025</Cell>
                  <Cell>16/04/2025</Cell>
                </tr>
              </tbody>
            </table>
            <Redaction className="top-[23px] left-[649px] h-3.5 w-[332px]" />
          </div>
        </div>
        <VScroll>
          <div className="h-[111px] bg-[#cdcdcd]" />
        </VScroll>
      </section>

      <section className="flex flex-1 flex-col border-t-2 border-[#ea8a1c]">
        <div className="flex flex-1">
          <div className={`${GRID_FONT} min-w-0 flex-1 overflow-hidden border-b border-white`}>
            <div className="relative w-[calc(100%+3px)]">
              <table className="w-full table-fixed border-separate border-spacing-0">
                <HeadRow columns={ITEM_COLUMNS} />
                <tbody>
                  {ITEMS.map((it, i) => {
                    const tone =
                      i === SELECTED
                        ? "bg-[#878527] text-[#ffffd0]"
                        : it.un === "KG"
                          ? "bg-[#f8dfe5] text-[#d80f1c]"
                          : "bg-[#ffffe0] text-[#87873a]";
                    return (
                      <tr key={it.desc} className={`${tone} h-5 text-[13px] leading-[17px]`}>
                        <td className="border-r border-[#c0c0c0] bg-white p-0">
                          {i === SELECTED && (
                            <svg width="7" height="11" viewBox="0 0 7 11" className="mb-0.5 ml-[3px]" aria-label="Linha atual">
                              <path d="M1 .5l5 5-5 5M0 3.500l2 2-2 2" fill="none" stroke="#000" strokeWidth="1.500" />
                            </svg>
                          )}
                        </td>
                        <TickCell label={`Selecionar ${it.desc}`} checked />
                        <Cell>CONFERIR</Cell>
                        <Cell />
                        <Cell>{it.forn}</Cell>
                        <Cell>{it.nota}</Cell>
                        <Cell>{it.contagem}</Cell>
                        <TickCell label={`Cód. recebido ${it.desc}`} />
                        <Cell>{it.desc}</Cell>
                        <Cell>{it.desc}</Cell>
                        <Cell align="right">{it.contada}</Cell>
                        <Cell align="right">{it.qnota}</Cell>
                        <Cell align="right">{it.dif}</Cell>
                        <Cell align="right">{it.cx}</Cell>
                        <Cell>{it.un}</Cell>
                        <Cell>{it.validade}</Cell>
                      </tr>
                    );
                  })}
                </tbody>
              </table>
              <Redaction className="top-6 left-[126px] h-48 w-[87px]" />
              <Redaction className="top-[25px] left-[244px] h-[190px] w-[46px]" />
              <Redaction className="top-[23px] left-[322px] h-[195px] w-[95px]" />
            </div>
          </div>
          <VScroll>
            <div className="grow-[259]" />
            <div className="grow-[373] bg-[#cdcdcd]" />
            <div className="grow-[74]" />
          </VScroll>
        </div>
        <div className="flex h-4 items-stretch bg-[#f0f0f0] pr-4">
          <button type="button" aria-label="Rolar para a esquerda" className="grid w-[17px] place-items-center">
            <Chevron dir="left" />
          </button>
          <div className="w-[17px] bg-[#cdcdcd]" />
          <button type="button" aria-label="Rolar para a direita" className="ml-auto grid w-[17px] place-items-center">
            <Chevron dir="right" />
          </button>
        </div>
      </section>

      <div className="h-4 shrink-0 bg-[#48638f] text-center text-[17px] leading-[18px] font-bold text-white">Item 8 de 10 Itens</div>

      <footer className="relative flex h-[34px] shrink-0 items-center gap-2 pr-[11px] pl-2.5">
        <ToolButton icon={<LegendIcon />} label="Legenda" bold className="w-[94px]" />
        <ToolButton icon={<GearIcon />} label="Opções" bold caret className="w-[101px]" />
        <ToolButton icon={<RecountIcon />} label="Recontar" className="w-[103px]" />
        <ToolButton icon={<Thumb />} label="Receber" className="w-[103px]" />
        <ToolButton icon={<Thumb down />} label="Devolução" className="w-[101px]" />
        <ToolButton icon={<AssociateIcon />} label="Associar" disabled className="w-[103px]" />
        <ToolButton icon={<PrinterIcon />} label="Imprimir" caret className="ml-[111px] w-[101px]" />
        <ToolButton icon={<CheckIcon />} label="Concluir" className="ml-auto w-[89px]" />
        <div aria-hidden="true" className="absolute -top-[11px] left-[426px] h-[51px] w-[134px] border-5 border-[#ed1c24]" />
        <svg aria-hidden="true" width="76" height="98" viewBox="0 0 76 98" className="absolute bottom-[71px] left-[459px]">
          <path d="M21 5h34.500v45H71L38 94 5 50h16z" fill="none" stroke="#ed1c24" strokeWidth="5" />
        </svg>
      </footer>

      <Taskbar />
    </div>
  );
}
